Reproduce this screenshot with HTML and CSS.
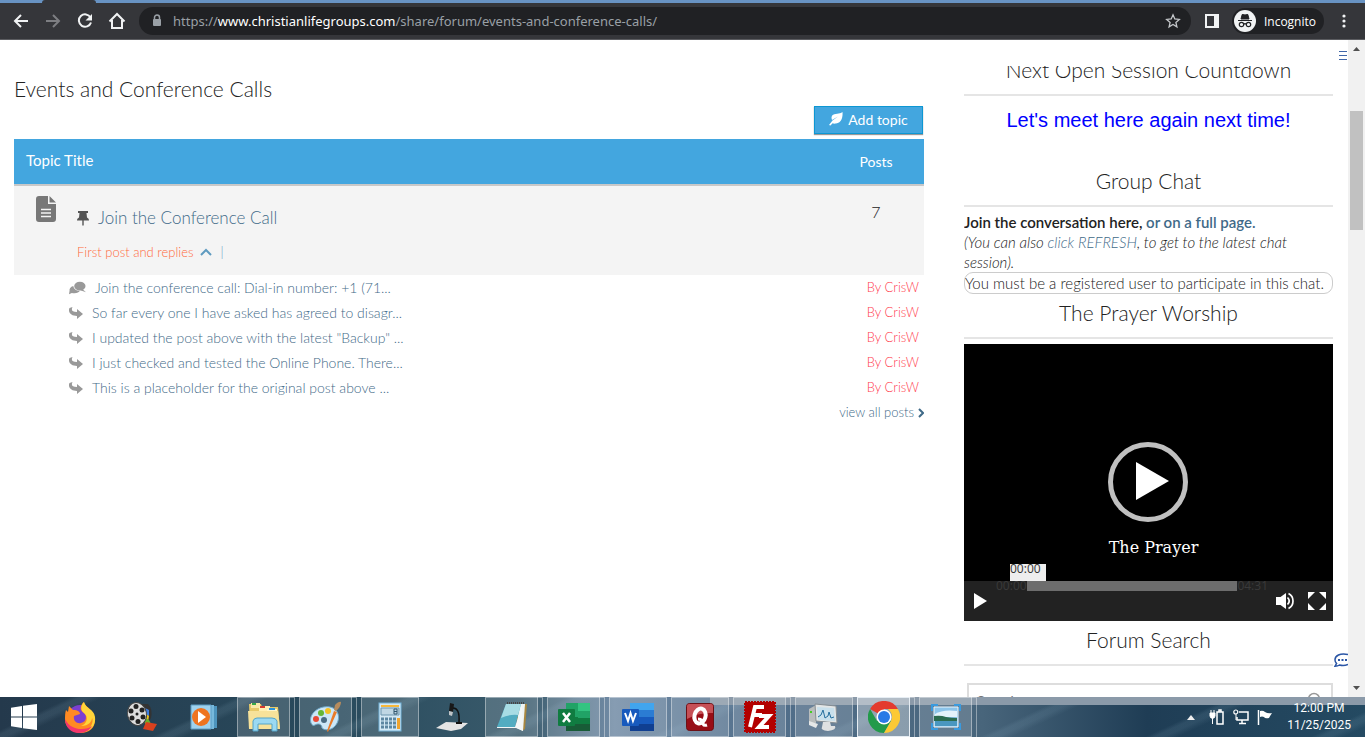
FILE: index.html
```html
<!DOCTYPE html>
<html lang="en">
<head>
    <meta charset="UTF-8">
    <meta name="viewport" content="width=device-width, initial-scale=1">
    <title>Events and Conference Calls</title>
    <link rel="stylesheet" href="styles.css">
</head>
<body>
    <!-- browser toolbar -->
    <header class="chrome">
        <div class="tabstrip"><span class="tab"></span></div>
        <div class="toolbar">
            <button class="nav" aria-label="Back"><svg width="16" height="16" viewBox="0 0 16 16"><path d="M15 8H2M8 2L2 8l6 6" fill="none" stroke="#f1f3f4" stroke-width="2"/></svg></button>
            <button class="nav" aria-label="Forward"><svg width="16" height="16" viewBox="0 0 16 16"><path d="M1 8h13M8 2l6 6-6 6" fill="none" stroke="#7d7e82" stroke-width="2"/></svg></button>
            <button class="nav" aria-label="Reload"><svg width="16" height="16" viewBox="0 0 16 16"><path d="M13.5 4.5A6.2 6.2 0 1 0 14 9.5" fill="none" stroke="#f1f3f4" stroke-width="2"/><path d="M15 1v6.500H8.500z" fill="#f1f3f4"/></svg></button>
            <button class="nav" aria-label="Home"><svg width="18" height="18" viewBox="0 0 18 18"><path d="M1.500 9.500L9 2l7.500 7.500M4 8v8h10V8" fill="none" stroke="#f1f3f4" stroke-width="2"/></svg></button>
            <div class="omnibox">
                <svg width="10" height="14" viewBox="0 0 10 14"><path d="M2.500 6V3.500a2.500 2.500 0 0 1 5 0V6" fill="none" stroke="#9aa0a6" stroke-width="1.500"/><rect x="1" y="5" width="8" height="7" rx="1" fill="#9aa0a6"/></svg>
                <a class="url" href="#">https://<b>www.christianlifegroups.com</b>/share/forum/events-and-conference-calls/</a>
                <svg width="16" height="16" viewBox="0 0 16 16"><path d="M8 1.800l1.800 4.200 4.500.4-3.400 3 1 4.500L8 11.500l-3.900 2.400 1-4.500-3.400-3 4.500-.4z" fill="none" stroke="#c4c7ca" stroke-width="1.300"/></svg>
            </div>
            <button class="panel" aria-label="Side panel"><svg width="14" height="14" viewBox="0 0 14 14"><path d="M0 0h14v14H0zM2 2v10h7V2z" fill="#f1f3f4" fill-rule="evenodd"/></svg></button>
            <button class="profile">
                <svg width="22" height="22" viewBox="0 0 22 22"><circle cx="11" cy="11" r="11" fill="#f1f3f4"/><path d="M4 10.500h14M7 9l1.200-4.500h1.300l1.500.6 1.500-.6h1.300L15 9z" fill="#202124" stroke="#202124"/><g fill="none" stroke="#202124" stroke-width="1.200"><circle cx="7.500" cy="14.500" r="2.200"/><circle cx="14.500" cy="14.500" r="2.200"/><path d="M9.700 14.200q1.300-1 2.600 0"/></g></svg>
                Incognito
            </button>
            <button class="more" aria-label="Menu"><svg width="4" height="14" viewBox="0 0 4 14"><g fill="#f1f3f4"><circle cx="2" cy="2" r="1.600"/><circle cx="2" cy="7" r="1.600"/><circle cx="2" cy="12" r="1.600"/></g></svg></button>
        </div>
    </header>

    <div class="viewport">
        <div class="page">
            <main class="forum">
                <h1>Events and Conference Calls</h1>
                <div class="actions">
                    <button class="add"><svg width="14" height="14" viewBox="0 0 14 14"><path d="M13.500 0C14 5 12.500 11 7 11.500c-1.500.2-2.600.2-3.400-.2L1.500 13.500 0 13l3.500-4.500L9 4.500 3 8C1 2.500 6 2 9.500 1.600 11.500 1.300 12.500.8 13.500 0z" fill="#fff"/></svg>Add topic</button>
                </div>
                <table class="topics">
                    <thead>
                        <tr><th>Topic Title</th><th class="count">Posts</th></tr>
                    </thead>
                    <tbody>
                        <tr>
                            <td>
                                <div class="topic">
                                    <svg width="20" height="26" viewBox="0 0 20 26"><path d="M3 0h9v8h8v15a3 3 0 0 1-3 3H3a3 3 0 0 1-3-3V3a3 3 0 0 1 3-3zm10.500 0L20 6.500h-6.500z" fill="#777"/><path d="M5 13.500h10M5 17h10M5 20.500h10" stroke="#f4f4f4" stroke-width="1.500"/></svg>
                                    <div class="topic-text">
                                        <a class="topic-link" href="#"><svg width="12" height="15" viewBox="0 0 12 15"><path d="M1 0h10v2H9.500l.5 4.500c1.500.8 2 1.800 2 3H0c0-1.200.5-2.200 2-3L2.500 2H1zM5.300 9.500h1.400V14L6 15l-.7-1z" fill="#555"/></svg>Join the Conference Call</a>
                                        <div class="replies"><a href="#">First post and replies <svg width="12" height="8" viewBox="0 0 12 8"><path d="M1 7l5-5 5 5" fill="none" stroke="#5f9bc0" stroke-width="2"/></svg></a><span>|</span></div>
                                    </div>
                                </div>
                            </td>
                            <td class="count">7</td>
                        </tr>
                    </tbody>
                </table>
                <ul class="posts">
                    <li><svg width="17" height="14" viewBox="0 0 18 14"><ellipse cx="11.500" cy="5" rx="6" ry="4.700" fill="#999"/><path d="M14 8l4 3.500-6-2z" fill="#999"/><path d="M4.500 5C1.500 6 .2 8 .6 10L0 13.500l3-1.300c4 1 7.500-.2 8.500-2.200C8 10.300 5 8.500 4.500 5z" fill="#999"/></svg><a href="#">Join the conference call: Dial-in number: +1 (71...</a><a class="by" href="#">By CrisW</a></li>
                    <li><svg width="14" height="12" viewBox="0 0 14 12"><path d="M3.500 0C2 3 3 5 8 5V2l6 5-6 5V9C2 9-1.500 5 .5 1z" fill="#999"/></svg><a href="#">So far every one I have asked has agreed to disagr...</a><a class="by" href="#">By CrisW</a></li>
                    <li><svg width="14" height="12" viewBox="0 0 14 12"><path d="M3.500 0C2 3 3 5 8 5V2l6 5-6 5V9C2 9-1.500 5 .5 1z" fill="#999"/></svg><a href="#">I updated the post above with the latest "Backup" ...</a><a class="by" href="#">By CrisW</a></li>
                    <li><svg width="14" height="12" viewBox="0 0 14 12"><path d="M3.500 0C2 3 3 5 8 5V2l6 5-6 5V9C2 9-1.500 5 .5 1z" fill="#999"/></svg><a href="#">I just checked and tested the Online Phone. There...</a><a class="by" href="#">By CrisW</a></li>
                    <li><svg width="14" height="12" viewBox="0 0 14 12"><path d="M3.500 0C2 3 3 5 8 5V2l6 5-6 5V9C2 9-1.500 5 .5 1z" fill="#999"/></svg><a href="#">This is a placeholder for the original post above ...</a><a class="by" href="#">By CrisW</a></li>
                </ul>
                <a class="view-all" href="#">view all posts <svg width="6" height="10" viewBox="0 0 6 10"><path d="M1 1l4 4-4 4" fill="none" stroke="#3f6a88" stroke-width="2"/></svg></a>
            </main>

            <aside class="side">
                <h2 class="cut">Next Open Session Countdown</h2>
                <p class="countdown">Let's meet here again next time!</p>
                <h2>Group Chat</h2>
                <p class="intro"><b>Join the conversation here, <a href="#">or on a full page.</a></b><br><i>(You can also <a href="#">click REFRESH</a>, to get to the latest chat session).</i></p>
                <div class="chatbox">You must be a registered user to participate in this chat.</div>
                <h2>The Prayer Worship</h2>
                <div class="video">
                    <button class="play-big" aria-label="Play video"><svg width="80" height="80" viewBox="0 0 80 80"><circle cx="40" cy="40" r="37.500" fill="none" stroke="#c0c0c0" stroke-width="5"/><path d="M28 20l33 19-33 19z" fill="#fff"/></svg></button>
                    <div class="caption">The Prayer</div>
                    <div class="tip">00:00</div>
                    <div class="controls">
                        <button aria-label="Play"><svg width="14" height="16" viewBox="0 0 14 16"><path d="M1 0l13 8-13 8z" fill="#fff"/></svg></button>
                        <span class="time start">00:00</span>
                        <span class="rail"></span>
                        <span class="time">04:31</span>
                        <button class="mute" aria-label="Mute"><svg width="18" height="18" viewBox="0 0 18 18"><path d="M0 5h4.500L10 1v16l-5.500-4H0z" fill="#fff"/><path d="M11.500 5.500q3.500 3.500 0 7M12.500 1.500c6 3 6 12 0 15" fill="none" stroke="#fff" stroke-width="1.700"/></svg></button>
                        <button aria-label="Fullscreen"><svg width="18" height="18" viewBox="0 0 18 18"><path d="M0 0h7L0 7zM18 0v7l-7-7zM0 18v-7l7 7zM18 18h-7l7-7z" fill="#fff"/></svg></button>
                    </div>
                </div>
                <h2>Forum Search</h2>
                <label class="search">
                    <input type="text" placeholder="Search..." aria-label="Search">
                    <svg width="16" height="16" viewBox="0 0 16 16"><circle cx="7" cy="7" r="5.500" fill="none" stroke="#999" stroke-width="1.500"/><path d="M11 11l4 4" stroke="#999" stroke-width="1.500"/></svg>
                </label>
            </aside>
            <svg class="edge-menu" width="9" height="9" viewBox="0 0 9 9"><path d="M0 0h8v1H0zM0 4h8v1H0zM0 8h8v1H0z" fill="#3f66a8"/></svg>
            <svg class="edge-chat" width="14" height="14" viewBox="0 0 14 14"><path d="M14 1.500C6-.5.8 3 1 7c0 1.500.6 2.600 1.600 3.500L1 13.200c2 0 3.500-.5 4.500-1.200 3 .8 6 .5 8.500-.5" fill="none" stroke="#2a55a5" stroke-width="1.500"/><path d="M4 6h2v2H4zM7.500 6h2v2h-2zM11 6h2v2h-2z" fill="#2a55a5"/></svg>
        </div>
        <div class="scrollbar">
            <svg width="7" height="4" viewBox="0 0 7 4"><path d="M0 4l3.500-4L7 4z" fill="#505050"/></svg>
            <span class="thumb"></span>
            <svg class="down" width="7" height="4" viewBox="0 0 7 4"><path d="M0 0l3.500 4L7 0z" fill="#505050"/></svg>
        </div>
    </div>

    <!-- taskbar -->
    <footer class="taskbar">
        <button class="start-btn" aria-label="Start"><svg width="26" height="26" viewBox="0 0 26 26"><path d="M0 3.800L11 2v10.500H0zM12 1.800L26 0v12.500H12zM0 13.500h11V24L0 22.300zM12 13.500h14V26l-14-1.800z" fill="#fff"/></svg></button>
        <button class="pin" aria-label="Firefox"><svg width="32" height="32" viewBox="0 0 32 32"><circle cx="16" cy="17" r="13" fill="#7a3fd0"/><path d="M2 9l2 2 1-6 4 4c5 0 7 2 7 4l-6 2c-1 5 3 8 7 7 6-1 6-8 3-10 0 0-2-1-3-3-1-3 1-7 3-8 0 5 10 6 11 18 0 8-6 13-14 13S1 26 1 19c0-4 0-7 1-10z" fill="#ff8a22"/><path d="M20 1c-4 4-3 9 0 11 5 4 3 11-3 13 8 0 11-5 11-8 2 3-1 11-7 14 7-2 11-8 10-15C30 8 22 8 20 1z" fill="#ffd43a"/><path d="M1 18c0 8 6 14 14 14 6 0 11-3 13-7-5 4-21 6-27-7z" fill="#f4366c"/></svg></button>
        <button class="pin" aria-label="Movie Maker"><svg width="32" height="32" viewBox="0 0 32 32"><path d="M14 3h8q5 5 3 14l-5 8z" fill="#333"/><path d="M17 6l6 3v6l-5-2z" fill="#3b7de0"/><path d="M17 11l6 4-1 6-5-3z" fill="#f0c520"/><path d="M18 16l5 3 3 6-7-2z" fill="#6ab02c"/><path d="M20 21l11 2-4 7-10-2z" fill="#d9411e"/><ellipse cx="11" cy="13" rx="9.500" ry="11.500" fill="#ddd" stroke="#444" transform="rotate(-12 11 13)"/><g fill="#222"><circle cx="10" cy="5.500" r="2.500"/><circle cx="16" cy="9" r="2.500"/><circle cx="17" cy="16" r="2.500"/><circle cx="12" cy="20.500" r="2.500"/><circle cx="6" cy="17" r="2.500"/><circle cx="5" cy="10" r="2.500"/><circle cx="11" cy="13" r="1.500"/></g></svg></button>
        <button class="pin" aria-label="Media Player"><svg width="28" height="28" viewBox="0 0 28 28"><path d="M8 3h19v22H8z" fill="#4d94bd"/><path d="M5 2h19v24H5z" fill="#77b9dc"/><path d="M1 2h20v24H1z" fill="#9fd2ee" stroke="#5c9dc4"/><circle cx="11" cy="14" r="9" fill="#ee7420"/><path d="M8 8l8 6-8 6z" fill="#fff"/></svg></button>

        <button class="app many" aria-label="Explorer"><svg width="34" height="32" viewBox="0 0 34 32"><path d="M2 3h12l1 3h16l2 22H3z" fill="#e8ca69"/><path d="M4 2h9v5H4z" fill="#f9eaaa"/><path d="M5 2h4v2H5z" fill="#39a848"/><path d="M12 5h11v5H12z" fill="#fff0b3"/><path d="M13 5h5v2h-5z" fill="#d43c30"/><path d="M20 8h10v4H20z" fill="#fff6cc"/><path d="M22 7h6v2h-6z" fill="#2c91da"/><path d="M1 10h30l2 18H2z" fill="#f7e29a"/><path d="M6 30V20q1-3 4-3h15q4 0 5 3v10h-5v-7H11v7z" fill="#9bd9f2" stroke="#54a4c8"/></svg></button>
        <button class="app many" aria-label="Paint"><svg width="32" height="32" viewBox="0 0 32 32"><path d="M1 22c-3-9 8-18 19-16 10 2 11 14 4 20-3 3-9 4-12 1 0-4-4-5-7-3-2 1-3 0-4-2z" fill="#cce7f7" stroke="#6ea9ca"/><circle cx="6" cy="18" r="3" fill="#e84a36"/><circle cx="11" cy="12" r="3" fill="#65b635"/><circle cx="18" cy="10" r="3" fill="#f3c126"/><circle cx="14" cy="19" r="3" fill="#486b82"/><path d="M17 30l7-20 3 1-9 20z" fill="#e97b28"/><path d="M24 9l1-5q4-4 6-3 0 5-5 9z" fill="#b68b5d"/></svg></button>
        <button class="app" aria-label="Calculator"><svg width="24" height="30" viewBox="0 0 24 30"><rect x="1" y="1" width="22" height="28" fill="#d4e9f5" stroke="#73b2d8"/><path d="M3 3h18v2H3z" fill="#f7b83b"/><path d="M3 6h18v7H3z" fill="#c0d7e4" stroke="#6d95ae"/><path d="M16 7h3v5h-3zM16 9.500h3" fill="none" stroke="#30566f"/><path d="M3 17h15M3 21h15M3 25h15" stroke="#5d87a2" stroke-width="3" stroke-dasharray="3 1"/><path d="M19 16h3v11h-3z" fill="#f0a42e"/></svg></button>
        <button class="pin" aria-label="Microscope"><svg width="32" height="30" viewBox="0 0 32 30"><path d="M0 26l10-6 22 1-7 6-10 2z" fill="#e4e4e4"/><path d="M16 6q8-1 7 14" fill="none" stroke="#111" stroke-width="1.500"/><path d="M14 1l4 1-1 8-4-1z" fill="#181818"/><path d="M13 9l4 1-1 4-3-1z" fill="#bfc4c7"/><path d="M20 20h6v2h-6z" fill="#111"/></svg></button>
        <button class="app many" aria-label="Notepad"><svg width="30" height="30" viewBox="0 0 30 30"><path d="M11 2h19l-2 25-3 2z" fill="#a9873f"/><path d="M22 2h6l-2 27-6-3z" fill="#edf3f4"/><path d="M9 2h15l-6 23H0z" fill="#52acc1"/><path d="M9 2h15l-3 11q-8-1-17 3z" fill="#a8dce4"/><path d="M0 25h18l7-22 1 26-7-3H0z" fill="#f4f7f7"/><path d="M10 1h18" stroke="#444" stroke-width="2" stroke-dasharray="1 1"/></svg></button>
        <button class="app many" aria-label="Excel"><svg width="32" height="28" viewBox="0 0 32 28"><path d="M8 0h24v28H8z" fill="#185c37"/><path d="M8 0h12v14H8z" fill="#21a366"/><path d="M20 0h12v8H20z" fill="#33c481"/><path d="M20 8h12v7H20z" fill="#21a366"/><path d="M8 14h12v7H8z" fill="#107c41" /><path d="M20 15h12v6H20z" fill="#107c41"/><rect y="6" width="17" height="17" rx="1" fill="#107c41"/><path d="M5 10l7 9M12 10l-7 9" stroke="#fff" stroke-width="2.500"/></svg></button>
        <button class="app" aria-label="Word"><svg width="32" height="28" viewBox="0 0 32 28"><path d="M8 0h24v28H8z" fill="#103f91"/><path d="M8 0h24v7H8z" fill="#41a5ee"/><path d="M8 7h24v7H8z" fill="#2b7cd3"/><path d="M8 14h24v7H8z" fill="#185abd"/><rect y="6" width="17" height="17" rx="1" fill="#185abd"/><path d="M3 10l3 8 2.500-8 2.500 8 3-8" fill="none" stroke="#fff" stroke-width="2"/></svg></button>
        <button class="app" aria-label="Quicken"><svg width="28" height="28" viewBox="0 0 28 28"><rect x=".5" y=".5" width="27" height="27" rx="3" fill="#980d16" stroke="#6c1015"/><path d="M1 3q0-2 2-2h22q2 0 2 2v7Q13 9 1 16z" fill="#c65056"/><ellipse cx="14" cy="13" rx="5.500" ry="7.500" fill="none" stroke="#fff" stroke-width="4" transform="rotate(15 14 13)"/><path d="M12 16q5 0 5 5 1 2 4 1" fill="none" stroke="#fff" stroke-width="3"/></svg></button>
        <button class="app many" aria-label="FileZilla"><svg width="32" height="32" viewBox="0 0 32 32"><rect x="1" y="1" width="30" height="30" fill="#b30000" stroke="#b30000" stroke-width="2" stroke-dasharray="2 1"/><path d="M20 6H11L6 26M9 14h9M15 15h10L15 26h10" fill="none" stroke="#fff" stroke-width="4"/></svg></button>
        <button class="app" aria-label="Resource Monitor"><svg width="32" height="28" viewBox="0 0 32 28"><path d="M1 6l7-4v18l-7 2z" fill="#b9bdbd"/><path d="M7 1l21 2 1 17-21-2z" fill="#e3e6e6" stroke="#858d92"/><path d="M9 4l17 1 1 13-17-1z" fill="#c8e0ec"/><path d="M10 14l3-2 2-5 2 8 3-2 1-4 2 6 3-1" fill="none" stroke="#246e9d"/><path d="M15 19h7l1 4h4q2 4-7 5-8-1-6-4z" fill="#dfe1e2"/><path d="M1 18l9 3-2 4-7-3z" fill="#e5e7e7"/><path d="M2 8h2v2H2z" fill="#4c2"/></svg></button>
        <button class="app many active" aria-label="Chrome"><svg width="32" height="32" viewBox="0 0 32 32"><path d="M16 16L2.100 8A16 16 0 0 1 29.900 8H16z" fill="#e33b2e"/><path d="M2.100 8A16 16 0 0 0 16 32l7-12-7-4-7 4z" fill="#229a4a"/><path d="M29.900 8A16 16 0 0 1 16 32l7-12q3-7-3-12z" fill="#fcc934"/><circle cx="16" cy="16" r="7.500" fill="#fff"/><circle cx="16" cy="16" r="6" fill="#287ae6"/></svg></button>
        <button class="app many" aria-label="Photo viewer"><svg width="30" height="26" viewBox="0 0 30 26"><path d="M3 3h24v20H3z" fill="#8cc4ea" stroke="#e9f5fc"/><path d="M4 10q8-5 22-3v6H4z" fill="#e4f2fa"/><path d="M3 12q7-1 12 1 5 1 11 1v3H3z" fill="#2c6c50"/><path d="M4 17h22v5H4z" fill="#4a97c0"/><path d="M1 7V1h6M23 1h6v6M1 19v6h6M23 25h6v-6" fill="none" stroke="#3a9ade" stroke-width="2"/></svg></button>

        <div class="tray">
            <svg class="caret" width="8" height="5" viewBox="0 0 8 5"><path d="M0 5l4-5 4 5z" fill="#eee"/></svg>
            <svg width="16" height="16" viewBox="0 0 16 16"><path d="M8 3h6v12H8zM10 1h2v2h-2z" fill="none" stroke="#fff" stroke-width="1.500"/><path d="M1 4h5v3L5 9H2L1 7zM2 1v3M5 1v3M3.500 9v6" fill="#fff" stroke="#fff"/></svg>
            <svg width="16" height="16" viewBox="0 0 16 16"><path d="M6 3h9v8H4V8M9 11v4M6 14.500h7" fill="none" stroke="#fff" stroke-width="1.500"/><circle cx="2.800" cy="3" r="2" fill="none" stroke="#fff" stroke-width="1.200"/><path d="M3 5v6" stroke="#fff"/></svg>
            <svg width="16" height="16" viewBox="0 0 16 16"><path d="M1.500 1v15" stroke="#fff" stroke-width="1.500"/><path d="M3 2q3-1 5 1 3 2 7 1-2 3-3 5-4 1-5-1-2-1-4 0z" fill="#fff"/></svg>
            <time class="clock">12:00 PM<br>11/25/2025</time>
        </div>
    </footer>
</body>
</html>
```
FILE: styles.css
```css
* {
    box-sizing: border-box;
}
html, body {
    height: 100%;
}
body {
    margin: 0;
    display: flex;
    flex-direction: column;
    overflow: hidden;
    background: #fff;
    color: #222;
    font-family: Lato, sans-serif;
    font-weight: 300;
    font-size: 14px;
}
a {
    color: #3f6a88;
    text-decoration: none;
}
button {
    padding: 0;
    border: 0;
    background: none;
    font-family: inherit;
}
svg {
    display: block;
    flex: none;
}
h1, h2, p, ul {
    margin: 0;
    padding: 0;
    font-weight: 300;
}

/* browser toolbar */
.chrome {
    flex: none;
    height: 40px;
    display: flex;
    flex-direction: column;
    background: #35363a;
    border-bottom: 1px solid #5b5c60;
    font-family: "Open Sans", sans-serif;
    font-weight: 400;
}
.tabstrip {
    height: 3px;
    padding-left: 42px;
    background: #6893c3;
}
.tab {
    display: block;
    width: 54px;
    height: 3px;
    background: #35363a;
    border-radius: 4px 4px 0 0;
}
.toolbar {
    flex: 1;
    display: flex;
    align-items: center;
    padding: 0 19px 0 5px;
}
.nav {
    width: 32px;
    display: flex;
    justify-content: center;
}
.omnibox {
    flex: 1;
    height: 28px;
    margin: 0 14px 0 6px;
    padding: 0 10px 0 13px;
    display: flex;
    align-items: center;
    border-radius: 14px;
    background: #202124;
}
.url {
    flex: 1;
    margin-left: 11px;
    color: #9aa0a6;
    font-family: "Noto Sans", sans-serif;
    font-size: 13px;
}
.url b {
    color: #fff;
    font-weight: 400;
}
.profile {
    height: 26px;
    margin: 0 18px 0 13px;
    padding: 0 8px 0 2px;
    display: flex;
    align-items: center;
    gap: 8px;
    border-radius: 13px;
    background: #202124;
    color: #fff;
    font-size: 12px;
}

/* page */
.viewport {
    flex: 1;
    min-height: 0;
    display: flex;
}
.page {
    position: relative;
    flex: 1;
    display: grid;
    grid-template-columns: 1fr 369px;
    gap: 40px;
    padding: 0 15px 0 14px;
    overflow: hidden;
}
.forum h1 {
    padding-top: 35px;
    font-size: 21px;
    line-height: 28px;
}
.actions {
    display: flex;
    justify-content: flex-end;
    padding: 3px 1px 5px 0;
}
.add {
    width: 109px;
    height: 28px;
    padding-bottom: 2px;
    display: flex;
    align-items: center;
    justify-content: center;
    gap: 5px;
    border: 1px solid #0d97d3;
    background: #43a6df;
    box-shadow: 0 1px 1px #999;
    color: #fff;
    font-size: 14px;
}
.topics {
    width: 100%;
    border-spacing: 0;
}
.topics th {
    height: 45px;
    padding: 0 12px 3px;
    background: #43a6df;
    color: #fff;
    font-size: 15px;
    font-weight: 400;
    text-align: left;
}
.topics td {
    height: 91px;
    padding: 0;
    border-top: 2px solid #c8c8c8;
    background: #f4f4f4;
    vertical-align: top;
}
.topics .count {
    width: 96px;
    padding: 0;
    text-align: center;
    font-size: 14px;
}
.topics td.count {
    padding-top: 16px;
    font-size: 16px;
}
.topic {
    display: flex;
    gap: 21px;
    padding: 10px 0 0 22px;
}
.topic-link {
    display: flex;
    align-items: center;
    gap: 9px;
    padding-top: 10px;
    line-height: 24px;
    font-size: 17px;
}
.replies {
    display: flex;
    gap: 9px;
    padding-top: 12px;
    line-height: 20px;
    font-size: 13px;
    color: #5f9bc0;
}
.replies a {
    display: flex;
    align-items: center;
    gap: 6px;
    color: #ff6a3c;
}
.posts {
    padding: 0 5px 0 55px;
    list-style: none;
}
.posts li {
    display: flex;
    align-items: center;
    gap: 9px;
    line-height: 25px;
}
.by {
    margin-left: auto;
    color: #ff3b4e;
    font-size: 13px;
}
.view-all {
    display: flex;
    align-items: center;
    justify-content: flex-end;
    gap: 4px;
    line-height: 25px;
    font-size: 13px;
}

/* sidebar */
.side {
    margin-top: 26px;
    overflow: hidden;
    line-height: 20px;
    font-size: 15px;
}
.side h2 {
    height: 44px;
    padding-top: 4px;
    border-bottom: 2px solid #e5e5e5;
    font-size: 21px;
    line-height: 28px;
    text-align: center;
}
.side h2.cut {
    margin-top: -14px;
}
.countdown {
    height: 67px;
    padding-top: 12px;
    color: #00f;
    font-family: "Liberation Sans", sans-serif;
    font-weight: 400;
    font-size: 20px;
    line-height: 24px;
    text-align: center;
}
.intro {
    padding-top: 5px;
}
.intro b {
    font-weight: 600;
}
.chatbox {
    height: 22px;
    margin-bottom: 1px;
    border: 1px solid #ccc;
    border-radius: 9px;
}
.video {
    position: relative;
    height: 277px;
    margin: 5px 0 1px;
    background: #000;
    color: #fff;
}
.play-big {
    position: absolute;
    top: 98px;
    left: 50%;
    margin-left: -41px;
}
.caption {
    position: absolute;
    top: 194px;
    left: 10px;
    right: 0;
    font-family: "DejaVu Serif", serif;
    font-size: 16px;
    font-weight: 400;
    text-align: center;
}
.tip {
    position: absolute;
    left: 46px;
    bottom: 40px;
    width: 36px;
    height: 17px;
    line-height: 10px;
    background: #eee;
    color: #333;
    font-family: "Open Sans", sans-serif;
    font-weight: 400;
    font-size: 12px;
}
.controls {
    position: absolute;
    left: 0;
    right: 0;
    bottom: 0;
    height: 40px;
    padding: 0 7px 0 9px;
    display: flex;
    align-items: center;
    background: #222;
}
.time {
    align-self: flex-start;
    line-height: 10px;
    color: #3a3a3a;
    font-family: "Open Sans", sans-serif;
    font-weight: 400;
    font-size: 12px;
}
.start {
    margin-left: 9px;
}
.rail {
    align-self: flex-start;
    flex: 1;
    height: 10px;
    background: #6d6d6d;
}
.mute {
    margin: 0 14px 0 8px;
}
.search {
    display: flex;
    align-items: center;
    height: 34px;
    margin: 17px 0 0 3px;
    padding: 0 8px 0 6px;
    border: 2px solid #ddd;
}
.search input {
    flex: 1;
    border: 0;
    outline: 0;
    font-family: inherit;
    font-size: 14px;
}
.edge-menu {
    position: absolute;
    top: 11px;
    right: 0;
}
.edge-chat {
    position: absolute;
    right: 0;
    bottom: 30px;
}
.scrollbar {
    flex: none;
    width: 17px;
    display: flex;
    flex-direction: column;
    align-items: center;
    padding: 7px 0;
    background: #f1f1f1;
}
.thumb {
    width: 13px;
    height: 119px;
    margin-top: 60px;
    background: #c1c1c1;
}
.down {
    margin-top: auto;
}

/* taskbar */
.taskbar {
    flex: none;
    height: 40px;
    display: flex;
    align-items: center;
    background:
        linear-gradient(#8b9aa9, #8b9aa9) 100% 0 / 48% 8px no-repeat,
        repeating-linear-gradient(155deg, transparent 0 30px, rgba(150, 185, 205, .12) 34px 38px, transparent 44px 70px),
        linear-gradient(90deg, #24394c, #294b5d 25%, #395a6b 38%, #718ba5 45%, #526f8b 56%, #48657b 72%, #1f3d55 84%, #244a62);
}
.start-btn {
    width: 49px;
    padding-left: 11px;
}
.pin {
    width: 62px;
    display: flex;
    justify-content: center;
}
.app {
    position: relative;
    width: 58px;
    height: 40px;
    margin: 0 2px;
    display: flex;
    align-items: center;
    justify-content: center;
    border: 1px solid rgba(255, 255, 255, .4);
    background: rgba(255, 255, 255, .15);
}
.many {
    width: 53px;
    margin-right: 7px;
}
/* edge of the windows stacked behind */
.many::after {
    content: "";
    position: absolute;
    top: -1px;
    right: -6px;
    width: 5px;
    height: 40px;
    border: 1px solid rgba(255, 255, 255, .4);
    border-left: 0;
}
.active {
    border-color: #e6edf3;
    background: rgba(255, 255, 255, .35);
}
.tray {
    margin-left: auto;
    padding-right: 14px;
    display: flex;
    align-items: center;
    gap: 8px;
}
.caret {
    margin-right: 6px;
}
.clock {
    margin-left: 6px;
    color: #fff;
    font-family: Roboto, sans-serif;
    font-weight: 400;
    font-size: 12px;
    line-height: 17px;
    text-align: center;
}
```
